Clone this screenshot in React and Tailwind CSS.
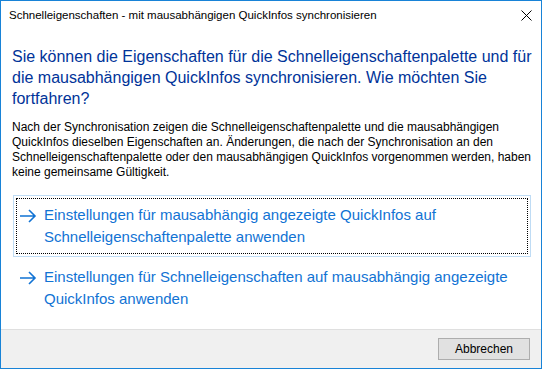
const font = { fontFamily: '"Liberation Sans", Arial, sans-serif' };

const Arrow = () => (
  <svg width="18" height="14" viewBox="0 0 18 14" className="shrink-0 mt-[5px]">
    <path d="M1 7h15M10 1l6 6-6 6" fill="none" stroke="#1173d4" strokeWidth="1.6" />
  </svg>
);

const CommandLink = ({ focused, lines }) => (
  <div
    className={`mx-[12px] w-[518px] p-[2px] border ${
      focused ? "border-[#bfdcf5]" : "border-transparent"
    }`}
  >
    <div
      className={`flex gap-[7px] pl-[2px] pt-[5px] pb-[5px] border border-dotted ${
        focused ? "border-black" : "border-transparent"
      }`}
    >
      <Arrow />
      <div className="text-[15px] leading-[22px] text-[#1173d4] whitespace-nowrap">
        {lines[0]}
        <br />
        {lines[1]}
      </div>
    </div>
  </div>
);

export default function App() {
  return (
    <div className="w-[543px] h-[370px] bg-white" style={font}>
      <div className="w-[542px] h-[369px] border border-[#1883d7] flex flex-col bg-white">
        <div className="h-[29px] flex items-center justify-between pl-[8px] pr-[9px]">
          <span className="text-[11.5px] text-black whitespace-nowrap">
            Schnelleigenschaften - mit mausabhängigen QuickInfos synchronisieren
          </span>
          <svg width="11" height="11" viewBox="0 0 11 11">
            <path d="M0.5 0.5l10 10M10.5 0.5l-10 10" stroke="#000" strokeWidth="1" />
          </svg>
        </div>

        <div className="flex-1 flex flex-col">
          <div className="px-[11px] pt-[16px] text-[16px] leading-[21px] text-[#003399] whitespace-nowrap">
            Sie können die Eigenschaften für die Schnelleigenschaftenpalette und für
            <br />
            die mausabhängigen QuickInfos synchronisieren. Wie möchten Sie
            <br />
            fortfahren?
          </div>

          <div className="px-[11px] pt-[11px] text-[12px] leading-[15px] text-black whitespace-nowrap">
            Nach der Synchronisation zeigen die Schnelleigenschaftenpalette und die mausabhängigen
            <br />
            QuickInfos dieselben Eigenschaften an. Änderungen, die nach der Synchronisation an den
            <br />
            Schnelleigenschaftenpalette oder den mausabhängigen QuickInfos vorgenommen werden, haben
            <br />
            keine gemeinsame Gültigkeit.
          </div>

          <div className="pt-[15px] flex flex-col">
            <CommandLink
              focused
              lines={[
                "Einstellungen für mausabhängig angezeigte QuickInfos auf",
                "Schnelleigenschaftenpalette anwenden",
              ]}
            />
            <CommandLink
              lines={[
                "Einstellungen für Schnelleigenschaften auf mausabhängig angezeigte",
                "QuickInfos anwenden",
              ]}
            />
          </div>
        </div>

        <div className="h-[39px] bg-[#f0f0f0] border-t border-[#dfdfdf] flex items-center justify-end pr-[11px]">
          <button className="w-[92px] h-[22px] bg-[#e1e1e1] border border-[#adadad] text-[12px] text-black">
            Abbrechen
          </button>
        </div>
      </div>
    </div>
  );
}
